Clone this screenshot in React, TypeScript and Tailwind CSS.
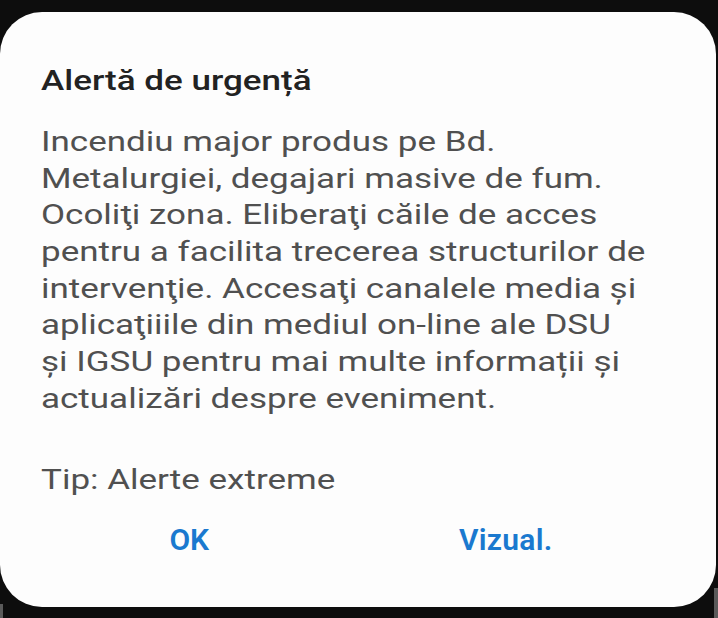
const lines = [
  "Incendiu major produs pe Bd.",
  "Metalurgiei, degajari masive de fum.",
  "Ocoliţi zona. Eliberaţi căile de acces",
  "pentru a facilita trecerea structurilor de",
  "intervenţie. Accesaţi canalele media și",
  "aplicaţiiile din mediul on-line ale DSU",
  "și IGSU pentru mai multe informații și",
  "actualizări despre eveniment.",
];

export default function App() {
  return (
    <div className="relative w-[718px] h-[618px] overflow-hidden bg-[#0d0d0d] pt-[12px] font-['Roboto',sans-serif]">
      {/* screen edge behind the dialog */}
      <div className="absolute right-0 bottom-0 w-[4px] h-[30px] bg-[#5a5a5a]" />
      <div className="absolute left-0 bottom-0 w-[3px] h-[14px] bg-[#5a5a5a]" />

      <div className="relative w-[716px] h-[595px] rounded-[42px] bg-[#fdfdfd] pl-[41px] pr-[40px] pt-[51px] flex flex-col">
        {/* the device renders its text stretched wide */}
        <div className="origin-left scale-x-125 whitespace-nowrap">
          <h2 className="text-[28px] leading-[36px] font-medium text-[#222222]">
            Alertă de urgență
          </h2>

          <p className="mt-[25px] text-[28px] leading-[36.67px] text-[#505050]">
            {lines.map((l) => (
              <span key={l} className="block">
                {l}
              </span>
            ))}
          </p>

          <p className="mt-[45px] text-[28px] leading-[36.67px] text-[#505050]">
            Tip: Alerte extreme
          </p>
        </div>

        <div className="mt-[23px] -ml-[10px] mr-[12px] grid grid-cols-2">
          <button className="text-[30px] leading-[36px] font-semibold text-[#1a79cf]">OK</button>
          <button className="text-[30px] leading-[36px] font-semibold tracking-[0.3px] text-[#1a79cf]">Vizual.</button>
        </div>
      </div>
    </div>
  );
}
